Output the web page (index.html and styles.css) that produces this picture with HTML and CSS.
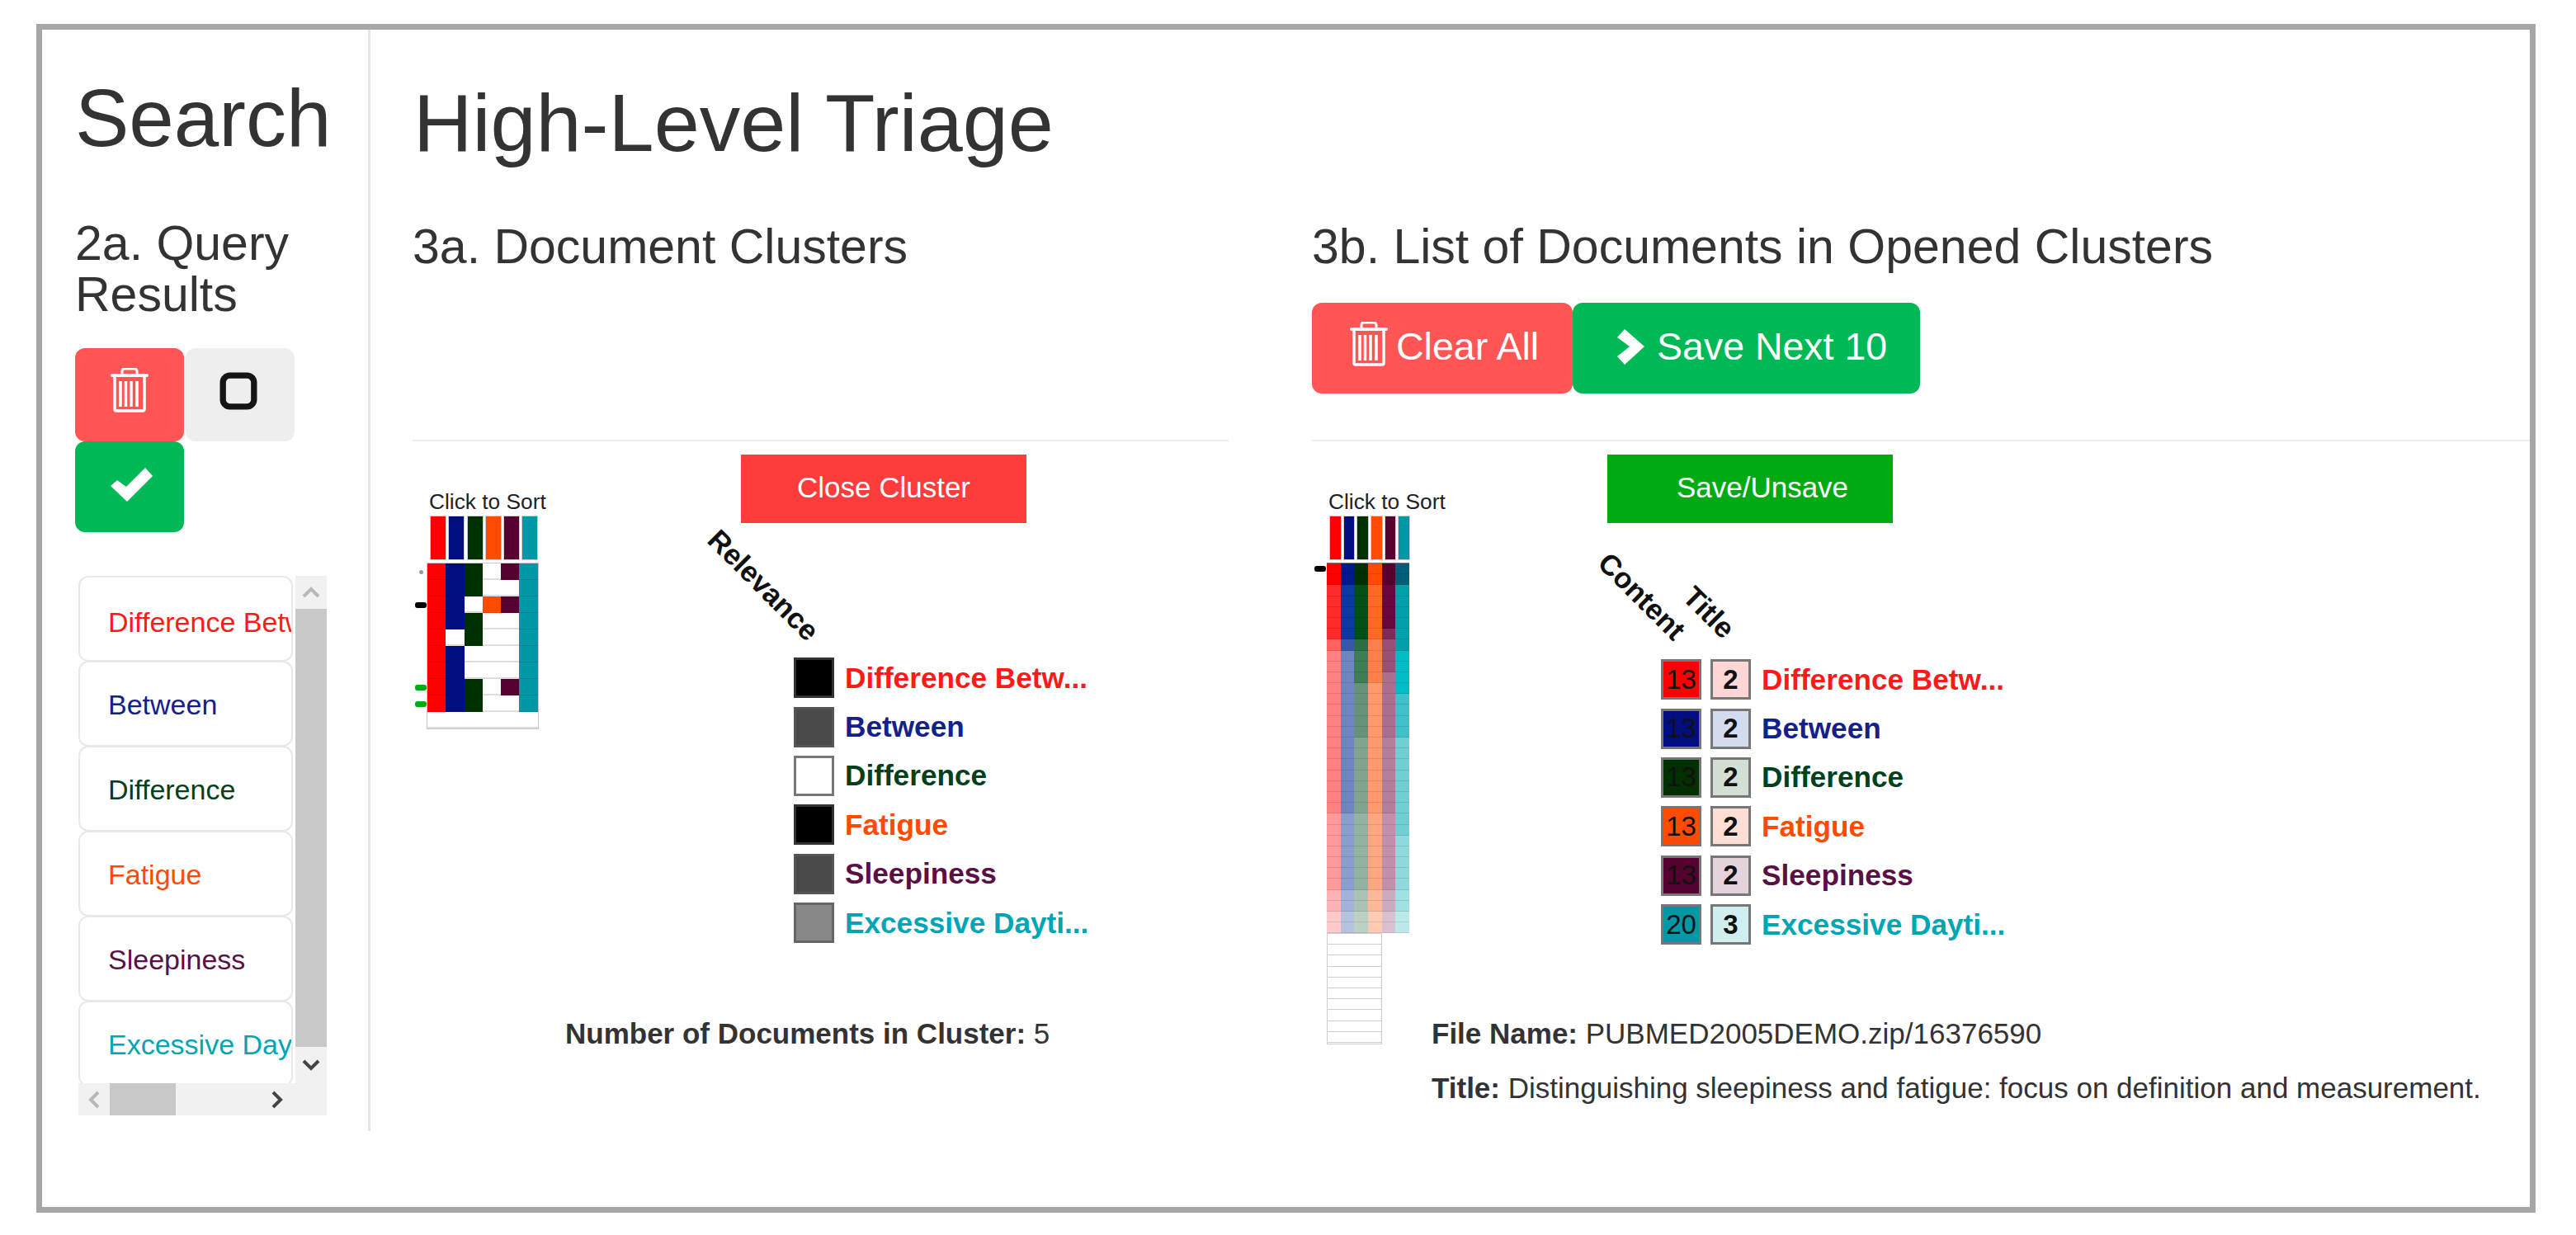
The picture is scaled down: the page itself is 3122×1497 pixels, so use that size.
FILE: index.html
```html
<!DOCTYPE html>
<html lang="en">
<head>
    <meta charset="UTF-8">
    <title>High-Level Triage</title>
    <link rel="stylesheet" href="styles.css">
</head>
<body>
    <div class="frame">
        <!-- search column -->
        <div class="sidebar">
            <h1 class="page-title">Search</h1>
            <h3 class="sub-title side-title">2a. Query Results</h3>
            <div class="side-btns">
                <div class="btn btn-red btn-icon">
                    <svg class="ico-trash" viewBox="0 0 46 54"><path d="M14 8V4a3 3 0 0 1 3-3h12a3 3 0 0 1 3 3v4" fill="none" stroke="#fff" stroke-width="3"/><rect y="7" width="46" height="4" rx="2" fill="#fff"/><path d="M5 11v39a2 2 0 0 0 2 2h32a2 2 0 0 0 2-2V11M12 16v31M18.500 16v31M25 16v31M32 16v31" fill="none" stroke="#fff" stroke-width="3.500"/></svg>
                </div>
                <div class="btn btn-gray btn-icon">
                    <svg class="ico-square" viewBox="0 0 44 44"><rect x="4" y="4" width="36" height="36" rx="8" fill="none" stroke="#151515" stroke-width="7"/></svg>
                </div>
                <div class="btn btn-green btn-icon">
                    <svg class="ico-check" viewBox="0 0 51 41"><path d="M0 22L8 15L19 23L42 0L51 10L20 41Z" fill="#fff"/></svg>
                </div>
            </div>
            <div class="scrollbox">
                <ul class="term-list">
                    <li class="c-red">Difference Between</li>
                    <li class="c-blue">Between</li>
                    <li class="c-green">Difference</li>
                    <li class="c-orange">Fatigue</li>
                    <li class="c-purple">Sleepiness</li>
                    <li class="c-teal">Excessive Daytime</li>
                </ul>
                <div class="vbar">
                    <div class="bar-btn vbar-up"><svg width="22" height="14" viewBox="0 0 22 14"><path d="M2 12L11 3L20 12" fill="none" stroke="#b8b8b8" stroke-width="4"/></svg></div>
                    <div class="vbar-thumb"></div>
                    <div class="bar-btn vbar-down"><svg width="22" height="14" viewBox="0 0 22 14"><path d="M2 2L11 11L20 2" fill="none" stroke="#444" stroke-width="4"/></svg></div>
                </div>
                <div class="hbar">
                    <div class="bar-btn hbar-left"><svg width="14" height="22" viewBox="0 0 14 22"><path d="M12 2L3 11L12 20" fill="none" stroke="#b8b8b8" stroke-width="4"/></svg></div>
                    <div class="hbar-thumb"></div>
                    <div class="bar-btn hbar-right"><svg width="14" height="22" viewBox="0 0 14 22"><path d="M2 2L11 11L2 20" fill="none" stroke="#444" stroke-width="4"/></svg></div>
                </div>
                <div class="corner"></div>
            </div>
        </div>

        <div class="main">
            <h1 class="page-title main-title">High-Level Triage</h1>
            <div class="columns">
                <!-- 3a -->
                <div class="col col-a">
                    <h3 class="sub-title">3a. Document Clusters</h3>
                    <div class="toolbar"></div>
                    <hr>
                    <div class="panel panel-a">
                        <div class="heat heat-a">
                            <div class="sort-label">Click to Sort</div>
                            <div class="bars">
                                <i class="bg-red"></i><i class="bg-blue"></i><i class="bg-green"></i><i class="bg-orange"></i><i class="bg-purple"></i><i class="bg-teal"></i>
                            </div>
                            <div class="matrix-wrap">
                                <div class="marks" id="marksA"></div>
                                <div class="matrix" id="matrixA"></div>
                            </div>
                        </div>
                        <div class="detail">
                            <div class="flat-btn flat-red">Close Cluster</div>
                            <div class="tilt-head">
                                <span class="tilt tilt-rel">Relevance</span>
                            </div>
                            <div class="legend">
                                <div class="legend-row"><span class="swatch sw-black"></span><b class="c-red">Difference Betw...</b></div>
                                <div class="legend-row"><span class="swatch sw-dark"></span><b class="c-blue">Between</b></div>
                                <div class="legend-row"><span class="swatch sw-white"></span><b class="c-green">Difference</b></div>
                                <div class="legend-row"><span class="swatch sw-black"></span><b class="c-orange">Fatigue</b></div>
                                <div class="legend-row"><span class="swatch sw-dark"></span><b class="c-purple">Sleepiness</b></div>
                                <div class="legend-row"><span class="swatch sw-mid"></span><b class="c-teal">Excessive Dayti...</b></div>
                            </div>
                        </div>
                        <div class="notes">
                            <p><strong>Number of Documents in Cluster:</strong> 5</p>
                        </div>
                    </div>
                </div>
                <!-- 3b -->
                <div class="col col-b">
                    <h3 class="sub-title">3b. List of Documents in Opened Clusters</h3>
                    <div class="toolbar">
                        <div class="btn btn-red btn-text btn-clear">
                            <svg class="ico-trash-sm" viewBox="0 0 46 54"><path d="M14 8V4a3 3 0 0 1 3-3h12a3 3 0 0 1 3 3v4" fill="none" stroke="#fff" stroke-width="3"/><rect y="7" width="46" height="4" rx="2" fill="#fff"/><path d="M5 11v39a2 2 0 0 0 2 2h32a2 2 0 0 0 2-2V11M12 16v31M18.500 16v31M25 16v31M32 16v31" fill="none" stroke="#fff" stroke-width="3.500"/></svg>
                            Clear All
                        </div>
                        <div class="btn btn-green btn-text btn-next">
                            <svg class="ico-chev" viewBox="0 0 33 43"><path d="M0 10L9 0L33 21L9 43L0 33L15 21Z" fill="#fff"/></svg>
                            Save Next 10
                        </div>
                    </div>
                    <hr>
                    <div class="panel panel-b">
                        <div class="heat heat-b">
                            <div class="sort-label">Click to Sort</div>
                            <div class="bars">
                                <i class="bg-red"></i><i class="bg-blue"></i><i class="bg-green"></i><i class="bg-orange"></i><i class="bg-purple"></i><i class="bg-teal"></i>
                            </div>
                            <div class="matrix-wrap">
                                <div class="marks" id="marksB"></div>
                                <div>
                                    <div class="matrix" id="matrixB"></div>
                                    <div class="matrix-empty"></div>
                                </div>
                            </div>
                        </div>
                        <div class="detail">
                            <div class="flat-btn flat-green">Save/Unsave</div>
                            <div class="tilt-head tilt-head-b">
                                <span class="tilt tilt-content">Content</span>
                                <span class="tilt tilt-title">Title</span>
                            </div>
                            <div class="legend legend-b">
                                <div class="legend-row"><span class="swatch bg-red">13</span><span class="swatch count t-red">2</span><b class="c-red">Difference Betw...</b></div>
                                <div class="legend-row"><span class="swatch bg-blue">13</span><span class="swatch count t-blue">2</span><b class="c-blue">Between</b></div>
                                <div class="legend-row"><span class="swatch bg-green">13</span><span class="swatch count t-green">2</span><b class="c-green">Difference</b></div>
                                <div class="legend-row"><span class="swatch bg-orange">13</span><span class="swatch count t-orange">2</span><b class="c-orange">Fatigue</b></div>
                                <div class="legend-row"><span class="swatch bg-purple">13</span><span class="swatch count t-purple">2</span><b class="c-purple">Sleepiness</b></div>
                                <div class="legend-row"><span class="swatch bg-teal">20</span><span class="swatch count t-teal">3</span><b class="c-teal">Excessive Dayti...</b></div>
                            </div>
                        </div>
                        <div class="notes">
                            <p><strong>File Name:</strong> PUBMED2005DEMO.zip/16376590</p>
                            <p><strong>Title:</strong> Distinguishing sleepiness and fatigue: focus on definition and measurement.</p>
                        </div>
                    </div>
                </div>
            </div>
        </div>
    </div>
    <script src="script.js"></script>
</body>
</html>
```

FILE: styles.css
```css
*{
    padding: 0;
    margin: 0;
    box-sizing: border-box;
}
body{
    background-color: #fff;
    font-family: "Liberation Sans", Arial, sans-serif;
    color: #333;
    overflow: hidden;
}
.frame{
    display: flex;
    align-items: flex-start;
    height: 1441px;
    margin: 29px 49px 0 44px;
    border: 7px solid #a6a6a6;
    background-color: #fff;
}

/* headings */
.page-title{
    font-size: 98px;
    font-weight: 400;
    line-height: 106px;
}
.sub-title{
    font-size: 59px;
    font-weight: 400;
    line-height: 65px;
}

/* sidebar */
.sidebar{
    width: 398px;
    height: 1335px;
    padding: 54px 0 0 40px;
    border-right: 3px solid #e6e6e6;
    flex-shrink: 0;
}
.side-title{
    width: 300px;
    margin-top: 68px;
    line-height: 62px;
}
.side-btns{
    display: flex;
    flex-wrap: wrap;
    gap: 0 2px;
    width: 270px;
    margin-top: 34px;
}
.btn{
    display: flex;
    align-items: center;
    justify-content: center;
    border-radius: 12px;
    color: #fff;
}
.btn-icon{
    width: 132px;
    height: 113px;
}
.btn-icon.btn-green{
    height: 110px;
}
.btn-red{
    background-color: #f55;
}
.btn-green{
    background-color: #00b855;
}
.btn-gray{
    background-color: #eee;
}
.ico-trash{
    width: 46px;
    height: 54px;
    margin-top: -12px;
}
.ico-square{
    width: 46px;
    height: 46px;
    margin: -9px 4px 0 0;
}
.ico-check{
    width: 51px;
    height: 41px;
    margin: -5px 0 0 4px;
}

/* scrolling term list */
.scrollbox{
    display: grid;
    grid-template-columns: 263px 38px;
    grid-template-rows: 615px 39px;
    width: 301px;
    margin: 53px 0 0 4px;
}
.term-list{
    list-style: none;
    overflow: hidden;
    font-size: 34px;
}
.term-list li{
    display: flex;
    align-items: center;
    width: 260px;
    height: 104px;
    margin-bottom: -1px;
    padding: 3px 0 0 34px;
    border: 2px solid #e8e8e8;
    border-radius: 12px;
    background-color: #fff;
    white-space: nowrap;
    overflow: hidden;
}
.term-list li:first-child{
    padding-top: 9px;
}
.vbar{
    display: flex;
    flex-direction: column;
    background-color: #f1f1f1;
}
.bar-btn{
    display: flex;
    align-items: center;
    justify-content: center;
}
.vbar-up{
    height: 40px;
}
.vbar-thumb{
    flex: 1;
    background-color: #c8c8c8;
}
.vbar-down{
    height: 44px;
}
.hbar{
    display: flex;
    background-color: #f1f1f1;
}
.hbar-left{
    width: 38px;
}
.hbar-thumb{
    width: 80px;
    background-color: #c8c8c8;
}
.hbar-right{
    flex: 1;
    padding-left: 100px;
}
.corner{
    background-color: #f1f1f1;
}

/* main area */
.main{
    flex: 1;
    padding: 60px 0 0 51px;
}
.main-title{
    margin-left: 1px;
    font-size: 99px;
}
.columns{
    display: flex;
    gap: 101px;
    margin-top: 65px;
}
.col-a{
    width: 989px;
}
.col-b{
    flex: 1;
}
.toolbar{
    display: flex;
    height: 110px;
    margin-top: 35px;
}
.btn-text{
    justify-content: flex-start;
    height: 110px;
    padding-bottom: 4px;
    font-size: 46.500px;
}
.btn-clear{
    width: 316px;
    padding-left: 46px;
    gap: 10px;
}
.btn-next{
    width: 421px;
    padding-left: 54px;
    gap: 15px;
}
.ico-trash-sm{
    width: 46px;
    height: 54px;
    margin-top: -6px;
}
.ico-chev{
    width: 33px;
    height: 43px;
}
hr{
    height: 2px;
    margin-top: 56px;
    border: 0;
    background-color: #eee;
}

/* panels */
.panel{
    display: grid;
    grid-template-rows: 693px auto;
}
.panel-a{
    grid-template-columns: 185px 213px 1fr;
}
.panel-b{
    grid-template-columns: 145px 213px 1fr;
}
.heat{
    padding: 60px 0 0 2px;
    grid-row: 1 / 3;
    grid-column: 1;
}
.heat-a{
    grid-column: 1 / 3;
    grid-row: 1;
    --col: 22.3px;
    --row: 20px;
    --bar: 18px;
}
.heat-b{
    --col: 16.7px;
    --row: 13.2px;
    --bar: 12.5px;
}
.sort-label{
    margin-left: 18px;
    font-size: 26.300px;
    line-height: 26px;
    color: #222;
    white-space: nowrap;
}
.bars{
    display: flex;
    gap: calc(var(--col) - var(--bar));
    margin: 5px 0 0 20px;
}
.bars i{
    display: block;
    width: var(--bar);
    height: 52px;
    outline: 1px solid #ccc;
}
.matrix-wrap{
    display: flex;
    margin-top: 5px;
}
.marks{
    width: 16px;
    padding-left: 1px;
    flex-shrink: 0;
}
.mark{
    display: flex;
    align-items: center;
    width: 14px;
}
.mark-black::before,
.mark-green::before,
.mark-small::before{
    content: "";
    display: block;
    width: 100%;
    height: 7px;
    border-radius: 3px;
    background-color: currentColor;
}
.mark-small::before{
    width: 5px;
    height: 5px;
    margin-left: 5px;
    background-color: #999;
}
.mark-black{
    color: #000;
}
.mark-green{
    color: #00aa13;
}
.matrix{
    display: grid;
    grid-template-columns: repeat(6, var(--col));
    grid-auto-rows: var(--row);
}
.heat-a .matrix{
    outline: 1px solid #c8c8c8;
}
.heat-b .matrix{
    box-shadow: 0 -1px 0 #777;
}
.matrix div{
    box-shadow: inset 0 -1px 0 rgba(0, 0, 0, .1);
}
.matrix .blank{
    background-color: #fff;
    box-shadow: inset 0 -2px 0 #ddd;
}
.matrix-empty{
    width: 67px;
    height: 135px;
    border: 1px solid #ccc;
    background: repeating-linear-gradient(to bottom, #fff 0, #fff 12.200px, #ccc 12.200px, #ccc 13.200px);
}
.detail{
    position: relative;
    grid-column: 3;
    grid-row: 1;
}
.flat-btn{
    display: flex;
    align-items: center;
    justify-content: center;
    width: 346px;
    height: 83px;
    margin-top: 16px;
    padding-bottom: 4px;
    color: #fff;
    font-size: 35px;
}
.flat-red{
    background-color: #ff3c3c;
}
.flat-green{
    padding-left: 30px;
    background-color: #00aa13;
}
.tilt-head{
    position: relative;
    height: 158px;
}
.tilt-head-b{
    height: 160px;
}
.tilt{
    position: absolute;
    font-size: 35px;
    font-weight: 700;
    line-height: 32px;
    color: #111;
    transform: rotate(45deg);
    transform-origin: 0 50%;
}
.tilt-rel{
    left: -34px;
    top: -2px;
}
.tilt-content{
    left: -5px;
    top: 26px;
}
.tilt-title{
    left: 98px;
    top: 67px;
}
.legend{
    margin-left: 64px;
}
.legend-b{
    margin-left: 65px;
}
.legend-row{
    display: flex;
    align-items: center;
    gap: 13px;
    height: 59.400px;
    font-size: 35.200px;
    white-space: nowrap;
}
.swatch{
    display: flex;
    align-items: center;
    justify-content: center;
    flex-shrink: 0;
    width: 49px;
    height: 49px;
    border: 3px solid #777;
    font-size: 33px;
    color: #111;
}
.legend-b .swatch:first-child{
    margin-right: -2px;
}
.count{
    font-weight: 700;
}
.sw-black{
    background-color: #000;
    border-color: #333;
}
.sw-dark{
    background-color: #4a4a4a;
    border-color: #555;
}
.sw-white{
    background-color: #fff;
}
.sw-mid{
    background-color: #888;
    border-color: #666;
}
.notes{
    grid-column: 2 / 4;
    grid-row: 2;
    font-size: 35px;
    line-height: 50px;
    white-space: nowrap;
}
.notes p + p{
    margin-top: 16px;
}

/* term colours */
.c-red{ color: #ff1a1a; }
.c-blue{ color: #14208c; }
.c-green{ color: #00401c; }
.c-orange{ color: #ff4b00; }
.c-purple{ color: #5a1045; }
.c-teal{ color: #00a5b5; }
.bg-red{ background-color: #f00; }
.bg-blue{ background-color: #000e80; }
.bg-green{ background-color: #002f00; }
.bg-orange{ background-color: #ff4b00; }
.bg-purple{ background-color: #55002f; }
.bg-teal{ background-color: #0097a7; }
.t-red{ background-color: #ffd6d6; }
.t-blue{ background-color: #d3dbef; }
.t-green{ background-color: #d3dfd3; }
.t-orange{ background-color: #ffdfd3; }
.t-purple{ background-color: #e4d3dd; }
.t-teal{ background-color: #d0eef0; }
```

FILE: script.js
```js
// 左边矩阵: one letter per column, "-" is an empty cell
var colors = {r: '#ff0000', b: '#000e80', g: '#002f00', o: '#ff4b00', p: '#55002f', t: '#0097a7'};
var rowsA = ['rbg-pt', 'rbg--t', 'rb-opt', 'rbg--t', 'r-g--t', 'rb---t', 'rb---t', 'rbg-pt', 'rbg--t', '------'];

// 右边矩阵: each column is a list of [row the band ends on, colour]
var bandsB = [
    [[2, '#ff0000'], [7, '#ff2a2a'], [8, '#ff6060'], [23, '#ff8080'], [30, '#ff9a9a'], [32, '#ffb3b3'], [34, '#ffcaca']],
    [[2, '#001a8a'], [7, '#0a3aa0'], [8, '#3558a8'], [23, '#6f85c0'], [30, '#8a9dcc'], [32, '#a3b2d8'], [34, '#b5c2e0']],
    [[2, '#002f00'], [7, '#005018'], [8, '#2a6e42'], [11, '#3f7d55'], [16, '#66927a'], [23, '#7fa58f'], [30, '#93b3a0'], [32, '#a9c2b3'], [34, '#bcd0c4']],
    [[2, '#ff4b00'], [7, '#ff6a20'], [11, '#ff7f4a'], [23, '#ff9a6c'], [30, '#ffa780'], [32, '#ffb998'], [34, '#ffcbb5']],
    [[2, '#55002f'], [6, '#6a0540'], [7, '#7f2a5a'], [10, '#9a4f78'], [16, '#aa6f90'], [23, '#b07f9a'], [30, '#c090aa'], [32, '#ccaabf'], [34, '#dbc0d0']],
    [[2, '#005f78'], [8, '#00a0aa'], [12, '#00bcc4'], [16, '#40c0c8'], [25, '#6fcfd3'], [30, '#8fd8dc'], [32, '#a0e0e2'], [34, '#bce8ea']]
];

function addCell(box, color) {
    var cell = document.createElement('div');
    if (color) {
        cell.style.backgroundColor = color;
    } else {
        cell.className = 'blank';
    }
    box.appendChild(cell);
}

function bandColor(bands, row) {
    for (var i = 0; i < bands.length; i++) {
        if (row < bands[i][0]) {
            return bands[i][1];
        }
    }
}

function addMark(box, height, name) {
    var mark = document.createElement('div');
    mark.className = 'mark ' + name;
    mark.style.height = height + 'px';
    box.appendChild(mark);
}

var matrixA = document.getElementById('matrixA');
for (var i = 0; i < rowsA.length; i++) {
    for (var j = 0; j < 6; j++) {
        addCell(matrixA, colors[rowsA[i].charAt(j)]);
    }
}

var matrixB = document.getElementById('matrixB');
for (var row = 0; row < 34; row++) {
    for (var col = 0; col < 6; col++) {
        addCell(matrixB, bandColor(bandsB[col], row));
    }
}

var marksA = document.getElementById('marksA');
var marksClass = ['mark-small', '', 'mark-black', '', '', '', '', 'mark-green', 'mark-green'];
for (var m = 0; m < marksClass.length; m++) {
    addMark(marksA, 20, marksClass[m]);
}
addMark(document.getElementById('marksB'), 13, 'mark-black');
```
